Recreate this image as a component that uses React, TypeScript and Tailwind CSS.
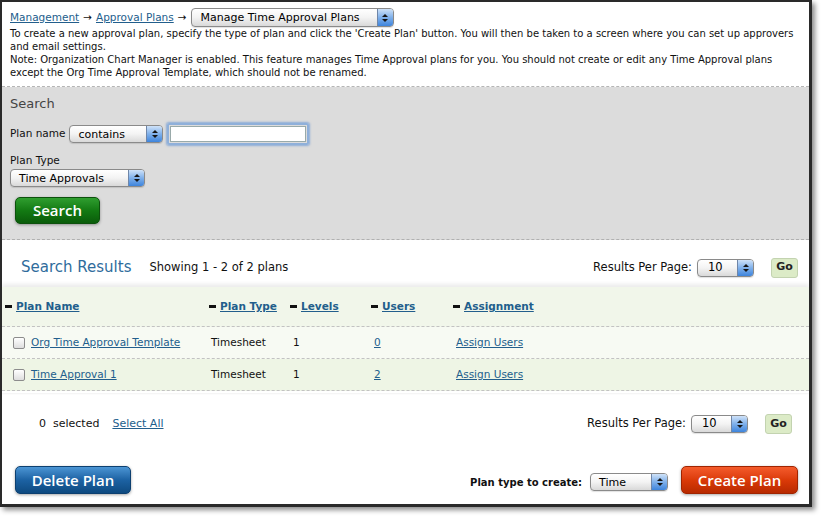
import React from "react";

function Select({ className, text, textClass }: { className: string; text: string; textClass?: string }) {
  return (
    <div
      className={
        "flex items-stretch rounded-[4px] border border-[#8a8a8a] bg-gradient-to-b from-white via-[#f3f3f3] to-[#d9d9d9] shadow-[0_1px_1px_rgba(0,0,0,0.12)] overflow-hidden " +
        className
      }
    >
      <div className={"flex-1 flex items-center pl-[8px] text-black leading-none " + (textClass ?? "text-[11px]")}>{text}</div>
      <div className="w-[16px] border-l border-[#6f86a8] bg-gradient-to-b from-[#cfe2f8] via-[#7fb0ea] to-[#3d84dc] flex flex-col items-center justify-center gap-[2px]">
        <svg width="6" height="3" viewBox="0 0 6 3">
          <path d="M0 3 L3 0 L6 3Z" fill="#151515" />
        </svg>
        <svg width="6" height="3" viewBox="0 0 6 3">
          <path d="M0 0 L3 3 L6 0Z" fill="#151515" />
        </svg>
      </div>
    </div>
  );
}

function Minus() {
  return <span className="inline-block w-[7px] h-[3px] bg-[#111] mr-[4px] align-middle" />;
}

function Check() {
  return (
    <span className="inline-block w-[12px] h-[12px] rounded-[2px] border border-[#8c8c8c] bg-gradient-to-b from-white to-[#dedede] mr-[6px] shrink-0" />
  );
}

function GoBtn() {
  return (
    <div className="w-[27px] h-[20px] rounded-[3px] border border-[#c3d3b0] bg-[#dcebc7] flex items-center justify-center text-[11px] font-bold text-[#222]">
      Go
    </div>
  );
}

const link = "text-[#225e8c] underline";

export default function App() {
  return (
    <div className="w-[821px] h-[516px] bg-white font-['DejaVu_Sans',Verdana,sans-serif] text-[10px] text-[#111]">
      <div className="w-[812px] h-[507px] border-[#2a2a2a] border-t-2 border-l-2 border-r-[3px] border-b-[3px] shadow-[3px_3px_5px_rgba(0,0,0,0.45)] flex flex-col bg-white overflow-hidden">
        {/* intro */}
        <div className="px-[8px] pt-[6px] pb-[7px] border-b border-dashed border-[#b5b5b5]">
          <div className="flex items-center h-[19px] text-[10.5px]">
            <span className={link}>Management</span>
            <span className="mx-[4px]">→</span>
            <span className={link}>Approval Plans</span>
            <span className="mx-[4px]">→</span>
            <Select className="w-[203px] h-[19px]" text="Manage Time Approval Plans" textClass="text-[11px] pl-[9px]" />
          </div>
          <div className="leading-[13px]">
            <p>
              To create a new approval plan, specify the type of plan and click the 'Create Plan' button. You will then be taken to a
              screen where you can set up approvers and email settings.
            </p>
            <p>
              Note: Organization Chart Manager is enabled. This feature manages Time Approval plans for you. You should not create or
              edit any Time Approval plans except the Org Time Approval Template, which should not be renamed.
            </p>
          </div>
        </div>

        {/* search panel */}
        <div className="bg-[#dcdcdc] px-[8px] pt-[9px] pb-[15px] border-b border-dashed border-[#b0b0b0]">
          <div className="text-[13px] leading-[16px] text-[#444]">Search</div>
          <div className="flex items-center mt-[11px] h-[22px]">
            <span className="text-[10.5px] mr-[4px]">Plan name</span>
            <Select className="w-[94px] h-[18px]" text="contains" />
            <div className="ml-[4px] w-[142px] h-[22px] rounded-[2px] border-[2px] border-[#8fb0da] shadow-[0_0_2px_1px_rgba(90,140,210,0.6)] p-[1px]">
              <div className="w-full h-full bg-white border border-[#9aa]" />
            </div>
          </div>
          <div className="mt-[9px] text-[10.5px] leading-[13px]">Plan Type</div>
          <Select className="mt-[2px] w-[135px] h-[18px]" text="Time Approvals" />
          <div className="mt-[10px] ml-[5px] w-[85px] h-[27px] rounded-[5px] bg-gradient-to-b from-[#2f9e2f] via-[#137a13] to-[#0a5c0a] border border-[#0c510c] shadow-[0_1px_3px_rgba(0,0,0,0.35)] flex items-center justify-center text-white text-[15px] font-['Open_Sans',sans-serif] font-semibold">
            Search
          </div>
        </div>

        {/* results header */}
        <div className="flex items-center h-[47px] pl-[19px] pr-[11px] pt-[8px]">
          <span className="text-[15px] text-[#2f6c9c]">Search Results</span>
          <span className="ml-[18px] text-[11.5px]">Showing 1 - 2 of 2 plans</span>
          <div className="ml-auto flex items-center">
            <span className="text-[11.5px] mr-[5px]">Results Per Page:</span>
            <Select className="w-[57px] h-[18px]" text="10" textClass="text-[11.5px] pl-[10px]" />
            <div className="ml-[17px]">
              <GoBtn />
            </div>
          </div>
        </div>

        {/* table */}
        <div className="bg-[#f1f6ea] shadow-[0_-3px_4px_rgba(0,0,0,0.08)] text-[10.5px]">
          <div className="grid grid-cols-[204px_81px_81px_82px_1fr] h-[40px] items-center border-b border-dashed border-[#c2c2c2] pl-[1px] font-bold">
            <div className="pl-[2px]">
              <Minus />
              <span className={link}>Plan Name</span>
            </div>
            <div className="pl-[2px]">
              <Minus />
              <span className={link}>Plan Type</span>
            </div>
            <div className="pl-[2px]">
              <Minus />
              <span className={link}>Levels</span>
            </div>
            <div className="pl-[2px]">
              <Minus />
              <span className={link}>Users</span>
            </div>
            <div className="pl-[2px]">
              <Minus />
              <span className={link}>Assignment</span>
            </div>
          </div>
          {[
            { name: "Org Time Approval Template", users: "0", bg: "bg-[#f7faf3]" },
            { name: "Time Approval 1", users: "2", bg: "bg-[#eef5e5]" },
          ].map((r) => (
            <div
              key={r.name}
              className={"grid grid-cols-[204px_81px_81px_82px_1fr] h-[32px] items-center border-b border-dashed border-[#c2c2c2] pl-[1px] " + r.bg}
            >
              <div className="pl-[10px] flex items-center">
                <Check />
                <span className={link}>{r.name}</span>
              </div>
              <div className="pl-[4px]">Timesheet</div>
              <div className="pl-[5px]">1</div>
              <div className="pl-[5px]">
                <span className={link}>{r.users}</span>
              </div>
              <div className="pl-[5px]">
                <span className={link}>Assign Users</span>
              </div>
            </div>
          ))}
          <div className="h-[2px] bg-white shadow-[0_1px_2px_rgba(0,0,0,0.06)]" />
        </div>

        {/* footer */}
        <div className="flex items-center h-[42px] mt-[10px] pl-[37px] pr-[17px] text-[11px]">
          <span>0&nbsp;&nbsp;selected</span>
          <span className={link + " ml-[13px]"}>Select All</span>
          <div className="ml-auto flex items-center">
            <span className="mr-[5px] text-[11.5px]">Results Per Page:</span>
            <Select className="w-[57px] h-[18px]" text="10" textClass="text-[11.5px] pl-[10px]" />
            <div className="ml-[17px]">
              <GoBtn />
            </div>
          </div>
        </div>

        <div className="flex-1 flex items-end pb-[10px] pl-[13px] pr-[11px]">
          <div className="w-[116px] h-[28px] rounded-[5px] bg-gradient-to-b from-[#4b95d4] via-[#1c62a3] to-[#0e4a80] border border-[#0d4070] shadow-[0_1px_3px_rgba(0,0,0,0.35)] flex items-center justify-center text-white text-[15px] font-['Open_Sans',sans-serif] font-semibold">
            Delete Plan
          </div>
          <div className="ml-auto flex items-center">
            <span className="text-[10px] font-bold mr-[8px] mt-[4px]">Plan type to create:</span>
            <Select className="w-[78px] h-[18px] mt-[4px]" text="Time" />
            <div className="ml-[13px] w-[117px] h-[28px] rounded-[5px] bg-gradient-to-b from-[#f45b2a] via-[#db3a08] to-[#b82a00] border border-[#a02400] shadow-[0_1px_3px_rgba(0,0,0,0.35)] flex items-center justify-center text-white text-[15px] font-['Open_Sans',sans-serif] font-semibold">
              Create Plan
            </div>
          </div>
        </div>
      </div>
    </div>
  );
}
